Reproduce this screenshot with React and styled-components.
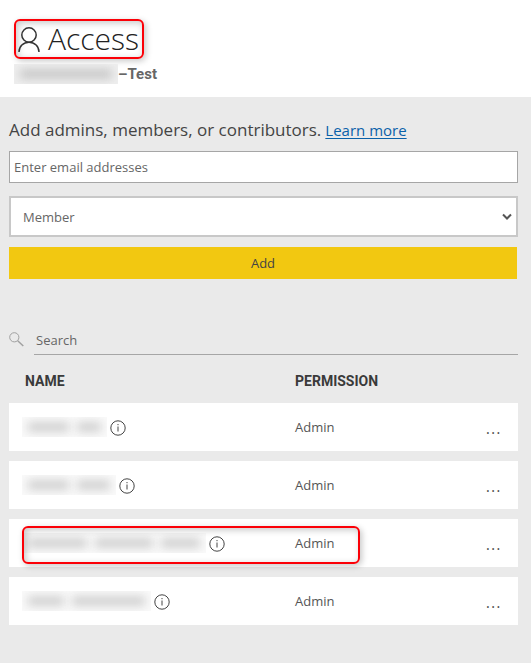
import React from "react";
import styled, { createGlobalStyle } from "styled-components";

const GlobalStyle = createGlobalStyle`
  * { box-sizing: border-box; }
  body {
    margin: 0;
    background: #eaeaea;
    color: #333;
    font-family: "Open Sans", "Noto Sans", sans-serif;
    font-size: 13px;
  }
  button, input, select { font: inherit; border-radius: 0; }
`;

const Header = styled.header`
  background: #fff;
  padding: 19px 14px 13px;
`;

const highlight = `
  border: 2px solid #fb0007;
  border-radius: 6px;
  box-shadow: 2px 2px 6px rgba(0, 0, 0, 0.22), inset 2px 2px 7px rgba(0, 0, 0, 0.22);
`;

const Title = styled.h1`
  ${highlight}
  display: inline-flex;
  align-items: center;
  gap: 8px;
  height: 40px;
  margin: 0;
  padding: 0 3px 0 2px;
  font-family: "Open Sans", sans-serif;
  font-size: 30px;
  line-height: 36px;
  font-weight: 300;
  color: #222;
  vertical-align: top;
`;

const Workspace = styled.div`
  display: flex;
  align-items: center;
  height: 20px;
  margin-top: 5px;
  font: 700 15px/20px Roboto, sans-serif;
  color: #666;
`;

const Redacted = styled.span`
  display: inline-flex;
  flex: none;
  align-items: center;
  gap: 8px;
  width: ${(p) => p.$width}px;
  height: 20px;
  padding: 0 6px;
  overflow: hidden;
  background: ${(p) => (p.$strong ? "#efefef" : "#fafafa")};
`;

const Smudge = styled.span`
  flex: ${(p) => p.$grow} 1 0;
  height: 10px;
  background: ${(p) => (p.$strong ? "#c8c8c8" : "#d0d0d0")};
  filter: blur(5px);
`;

const Main = styled.main`
  padding: 20px 13px 28px 9px;
`;

const Intro = styled.p`
  display: flex;
  flex-wrap: wrap;
  align-items: baseline;
  gap: 4px;
  margin: 0 0 8px;
  font-size: 17px;
  line-height: 26px;
  color: #444;
`;

const Link = styled.a`
  font-size: 15px;
  color: #0a61a9;
  text-underline-offset: 2px;
`;

const Form = styled.form`
  display: flex;
  flex-direction: column;
`;

const EmailInput = styled.input`
  height: 32px;
  padding: 0 4px;
  border: 1px solid #a6a6a6;
  background: #fff;
  color: #333;
  outline: none;
  &::placeholder { color: #666; opacity: 1; }
`;

const RoleField = styled.div`
  display: grid;
  align-items: center;
  margin: 13px 0 10px;
  & > * { grid-area: 1 / 1; }
  & > svg { justify-self: end; margin-right: 5px; pointer-events: none; }
`;

const RoleSelect = styled.select`
  appearance: none;
  width: 100%;
  height: 41px;
  padding: 0 24px 0 12px;
  border: 2px solid #c8c8c8;
  background: #fff;
  color: #666;
`;

const AddButton = styled.button`
  height: 32px;
  margin-right: 1px;
  border: 0;
  background: #f2c811;
  color: #444;
`;

const Search = styled.label`
  display: flex;
  align-items: center;
  gap: 10px;
  margin-top: 47px;
`;

const SearchInput = styled.input`
  flex: 1;
  min-width: 0;
  height: 29px;
  padding: 0 2px;
  border: 0;
  border-bottom: 1px solid #a6a6a6;
  background: transparent;
  outline: none;
  &::placeholder { color: #666; opacity: 1; }
`;

const Table = styled.table`
  width: 100%;
  table-layout: fixed;
  border-collapse: separate;
  border-spacing: 0 10px;
`;

const HeadCell = styled.th`
  width: ${(p) => p.$width};
  height: 28px;
  padding: ${(p) => (p.$first ? "4px 0 0 16px" : "4px 0 0 1px")};
  text-align: left;
  font: 700 14px/18px Roboto, sans-serif;
  color: #3a3a3a;
`;

const Row = styled.tr`
  position: relative;
  height: 48px;
  background: #fff;
`;

const Cell = styled.td`
  padding: ${(p) => (p.$first ? "0 0 0 13px" : "0 0 0 1px")};
  color: #555;
`;

const Person = styled.div`
  display: flex;
  align-items: center;
  gap: 3px;
`;

const IconButton = styled.button`
  display: flex;
  padding: 2px 0 0;
  border: 0;
  background: transparent;
  color: #444;
`;

const MoreButton = styled.button`
  display: block;
  margin: 0 17px 4px auto;
  padding: 0;
  border: 0;
  background: transparent;
  color: #555;
  font-size: 22px;
  font-weight: 300;
  line-height: 30px;
`;

const RowHighlight = styled.span`
  ${highlight}
  position: absolute;
  inset: 7px 31% 3px 13px;
  pointer-events: none;
`;

const PersonIcon = () => (
  <svg width="22" height="27" viewBox="0 0 22 27" fill="none" stroke="#333" strokeWidth="1.5" aria-hidden="true">
    <circle cx="11" cy="9" r="7.2" />
    <path d="M1 26c0-5.600 4.300-9.800 10-9.800s10 4.200 10 9.800" />
  </svg>
);

const SearchIcon = () => (
  <svg width="15" height="17" viewBox="0 0 15 17" fill="none" stroke="#a0a0a0" aria-hidden="true">
    <circle cx="5.300" cy="5.300" r="4.600" />
    <path d="M8.700 8.700l5.600 5.300" strokeWidth="1.500" />
  </svg>
);

const ChevronIcon = () => (
  <svg width="12" height="8" viewBox="0 0 12 8" fill="none" stroke="#555" strokeWidth="2" aria-hidden="true">
    <path d="M2 1.500l4 4 4-4" />
  </svg>
);

const InfoIcon = () => (
  <svg width="16" height="16" viewBox="0 0 16 16" fill="none" stroke="currentColor" aria-hidden="true">
    <circle cx="8" cy="8" r="7.200" />
    <path d="M8 6.500v5M8 4v1.200" />
  </svg>
);

const HiddenName = ({ width, words, strong }) => (
  <Redacted $width={width} $strong={strong} aria-label="Hidden name" role="img">
    {words.map((grow, i) => (
      <Smudge key={i} $grow={grow} $strong={strong} />
    ))}
  </Redacted>
);

const members = [
  { width: 85, words: [5, 3] },
  { width: 94, words: [5, 4] },
  { width: 184, words: [6, 6, 4], highlighted: true },
  { width: 129, words: [4, 8] },
];

export default function App() {
  return (
    <>
      <GlobalStyle />
      <Header>
        <Title>
          <PersonIcon />
          Access
        </Title>
        <Workspace>
          <HiddenName width={104} words={[1]} strong />
          <span>–Test</span>
        </Workspace>
      </Header>
      <Main>
        <Intro>
          <span>Add admins, members, or contributors.</span>
          <Link href="#learn-more">Learn more</Link>
        </Intro>
        <Form onSubmit={(e) => e.preventDefault()}>
          <EmailInput type="email" placeholder="Enter email addresses" aria-label="Email addresses" />
          <RoleField>
            <RoleSelect aria-label="Role" defaultValue="Member">
              <option>Member</option>
            </RoleSelect>
            <ChevronIcon />
          </RoleField>
          <AddButton type="submit">Add</AddButton>
        </Form>
        <Search>
          <SearchIcon />
          <SearchInput type="search" placeholder="Search" aria-label="Search" />
        </Search>
        <Table>
          <thead>
            <tr>
              <HeadCell $first $width="56%">NAME</HeadCell>
              <HeadCell $width="28%">PERMISSION</HeadCell>
              <HeadCell $width="16%" aria-label="Actions" />
            </tr>
          </thead>
          <tbody>
            {members.map((m, i) => (
              <Row key={i}>
                <Cell $first>
                  <Person>
                    <HiddenName width={m.width} words={m.words} />
                    <IconButton type="button" aria-label="Member details">
                      <InfoIcon />
                    </IconButton>
                  </Person>
                  {m.highlighted && <RowHighlight />}
                </Cell>
                <Cell>Admin</Cell>
                <Cell>
                  <MoreButton type="button" aria-label="More options">...</MoreButton>
                </Cell>
              </Row>
            ))}
          </tbody>
        </Table>
      </Main>
    </>
  );
}
